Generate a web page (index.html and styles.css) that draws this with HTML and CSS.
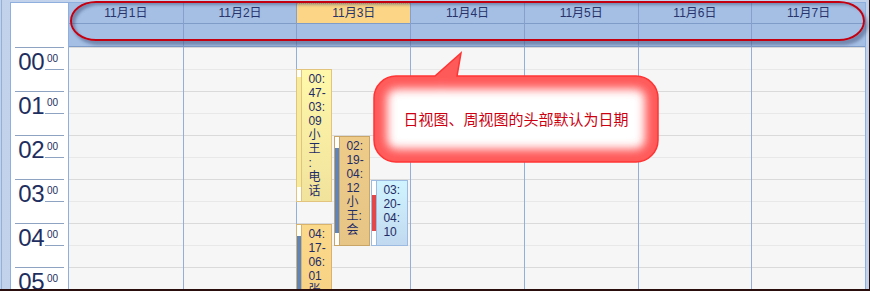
FILE: index.html
```html
<!DOCTYPE html>
<html lang="zh-CN">
<head>
<meta charset="utf-8">
<title>周视图</title>
<link rel="stylesheet" href="styles.css">
</head>
<body>
<div class="page">
  <div class="cal">
    <div class="cal-head">
      <div class="corner"></div>
      <div class="day-head"><div class="date">11月1日</div><div class="allday"></div></div>
      <div class="day-head"><div class="date">11月2日</div><div class="allday"></div></div>
      <div class="day-head today"><div class="date">11月3日</div><div class="allday"></div></div>
      <div class="day-head"><div class="date">11月4日</div><div class="allday"></div></div>
      <div class="day-head"><div class="date">11月5日</div><div class="allday"></div></div>
      <div class="day-head"><div class="date">11月6日</div><div class="allday"></div></div>
      <div class="day-head"><div class="date">11月7日</div><div class="allday"></div></div>
    </div>
    <div class="cal-body">
      <div class="times">
        <div class="hour"><span class="h">00</span><span class="m">00</span></div>
        <div class="hour"><span class="h">01</span><span class="m">00</span></div>
        <div class="hour"><span class="h">02</span><span class="m">00</span></div>
        <div class="hour"><span class="h">03</span><span class="m">00</span></div>
        <div class="hour"><span class="h">04</span><span class="m">00</span></div>
        <div class="hour"><span class="h">05</span><span class="m">00</span></div>
      </div>
      <div class="day"></div>
      <div class="day"></div>
      <div class="day">
        <div class="event ev-yellow col0" style="top:22px;height:133px">
          <div class="strip"><span class="bar" style="top:7px;height:110px"></span></div>
          <div class="ev-text">00:<br>47-<br>03:<br>09<br>小<br>王<br>:<br>电<br>话</div>
        </div>
        <div class="event ev-tan col1" style="top:89px;height:110px">
          <div class="strip"><span class="bar" style="top:11px;height:85px"></span></div>
          <div class="ev-text">02:<br>19-<br>04:<br>12<br>小<br>王:<br>会</div>
        </div>
        <div class="event ev-blue col2" style="top:133px;height:66px">
          <div class="strip"><span class="bar" style="top:14px;height:36px"></span></div>
          <div class="ev-text">03:<br>20-<br>04:<br>10</div>
        </div>
        <div class="event ev-orange col0" style="top:177px;height:130px">
          <div class="strip"><span class="bar" style="top:11px;height:100px"></span></div>
          <div class="ev-text">04:<br>17-<br>06:<br>01<br>张</div>
        </div>
      </div>
      <div class="day"></div>
      <div class="day"></div>
      <div class="day"></div>
      <div class="day"></div>
    </div>

    <div class="oval"></div>

    <div class="callout">
      <svg class="bubble" width="296" height="118" viewBox="0 0 296 118" aria-hidden="true">
        <defs>
          <clipPath id="bubbleClip">
            <path d="M26,26 L65,26 L91,3 L87,26 L266,26 A22,22 0 0 1 288,48 L288,90 A22,22 0 0 1 266,112 L26,112 A22,22 0 0 1 4,90 L4,48 A22,22 0 0 1 26,26 Z"/>
          </clipPath>
          <filter id="soft" x="-20%" y="-20%" width="140%" height="140%">
            <feGaussianBlur stdDeviation="5"/>
          </filter>
        </defs>
        <g clip-path="url(#bubbleClip)">
          <rect x="0" y="0" width="296" height="118" fill="#ffffff"/>
          <path d="M26,26 L65,26 L91,3 L87,26 L266,26 A22,22 0 0 1 288,48 L288,90 A22,22 0 0 1 266,112 L26,112 A22,22 0 0 1 4,90 L4,48 A22,22 0 0 1 26,26 Z" fill="none" stroke="#ff5a5a" stroke-width="26" filter="url(#soft)"/>
        </g>
        <path d="M26,26 L65,26 L91,3 L87,26 L266,26 A22,22 0 0 1 288,48 L288,90 A22,22 0 0 1 266,112 L26,112 A22,22 0 0 1 4,90 L4,48 A22,22 0 0 1 26,26 Z" fill="none" stroke="#ff3434" stroke-width="1.5"/>
      </svg>
      <span class="callout-text">日视图、周视图的头部默认为日期</span>
    </div>
  </div>
</div>
</body>
</html>
```

FILE: styles.css
```css
* { box-sizing: border-box; }

html, body {
  margin: 0;
  padding: 0;
}

body {
  width: 870px;
  height: 291px;
  overflow: hidden;
  background: #c7d6ed;
}

.page {
  width: 870px;
  height: 291px;
  padding: 2px 0 0 10px;
  border-right: 1px solid #2a0d0d;
  border-bottom: 2px solid #2a0d0d;
  background:
    linear-gradient(to right, transparent 1px, #93afda 1px, #93afda 2px, transparent 2px),
    radial-gradient(circle, #b9cbe6 0.6px, transparent 0.8px) 0 0 / 2px 2px,
    #cad8ee;
  overflow: hidden;
}

.cal {
  position: relative;
  width: 856px;
  height: 287px;
  border: 1px solid #8fb0de;
  border-bottom: 0;
  display: flex;
  flex-direction: column;
  font-family: "Liberation Sans", "Noto Sans CJK SC", sans-serif;
}

/* ---------- header ---------- */
.cal-head {
  display: grid;
  grid-template-columns: 58px repeat(7, 1fr);
  height: 44px;
  flex: none;
  background: #a4bee4;
}

.corner {
  background: #ffffff;
  border-right: 1px solid #8fb0de;
}

.day-head {
  display: flex;
  flex-direction: column;
  border-bottom: 1px solid #7f9bc8;
}

.day-head + .day-head {
  border-left: 1px solid #869fcb;
}

.date {
  height: 21px;
  padding-top: 2px;
  line-height: 17px;
  text-align: center;
  font-size: 12px;
  color: #27336a;
  border-bottom: 1px solid #7f9bc8;
}

.today .date {
  background: #fcd686;
  border-top: 1px dotted #e2b466;
  padding-top: 1px;
}

.allday {
  flex: 1;
}

/* ---------- body ---------- */
.cal-body {
  flex: 1;
  min-height: 0;
  display: grid;
  grid-template-columns: 58px repeat(7, 1fr);
  overflow: hidden;
}

.times {
  background: #ffffff;
  border-right: 1px solid #8fb0de;
  overflow: hidden;
}

.hour {
  height: 44px;
  margin: 0 4px;
  border-top: 1px solid #8ea2c2;
  display: flex;
  color: #1e2e5e;
}

.hour .h {
  width: 29px;
  padding-top: 2px;
  text-align: right;
  font-size: 24px;
  line-height: 24px;
  letter-spacing: -0.5px;
}

.hour .m {
  width: 19px;
  height: 22px;
  margin-left: 1px;
  padding: 6px 0 0 2px;
  font-size: 10px;
  line-height: 10px;
  border-bottom: 1px solid #8ea2c2;
}

.day {
  position: relative;
  background: repeating-linear-gradient(to bottom,
    #dadada 0, #dadada 1px,
    #f6f6f6 1px, #f6f6f6 22px,
    #e8e8e8 22px, #e8e8e8 23px,
    #f6f6f6 23px, #f6f6f6 44px);
}

.day + .day {
  border-left: 1px solid #93afd9;
}

/* ---------- events ---------- */
.event {
  position: absolute;
  display: flex;
  border: 1px solid;
  overflow: hidden;
  color: #1f2c66;
}

.col0 { left: -1px; width: 36px; }
.col1 { left: 37px; width: 36px; }
.col2 { left: 74px; width: 37px; }

.strip {
  position: relative;
  flex: none;
  width: 5px;
  background: #ffffff;
  border-right: 1px solid;
}

.bar {
  position: absolute;
  left: 0;
  right: 0;
}

.ev-text {
  padding: 2px 0 0 6px;
  font-size: 12px;
  line-height: 14px;
  white-space: nowrap;
}

.ev-yellow {
  border-color: #e2c47e;
  background: linear-gradient(to bottom, #fff8aa, #f1e29c);
}
.ev-yellow .strip { border-color: #e2c47e; }
.ev-yellow .bar { background: #f7ec9e; }

.ev-tan {
  border-color: #c9a568;
  background: linear-gradient(to bottom, #eecb88, #e6c586);
}
.ev-tan .strip { border-color: #c9a568; }
.ev-tan .bar { background: #5e84bd; }

.ev-blue {
  border-color: #9dbbe0;
  background: linear-gradient(to bottom, #d0f4ff, #c2d9ef);
}
.ev-blue .strip { border-color: #9dbbe0; }
.ev-blue .bar { background: #e2474a; }

.ev-orange {
  border-color: #d9b36c;
  background: linear-gradient(to bottom, #fbd98a, #f4cd82);
}
.ev-orange .strip { border-color: #d9b36c; }
.ev-orange .bar { background: #5e84bd; }

/* ---------- annotations ---------- */
.oval {
  position: absolute;
  left: 59px;
  top: -2px;
  width: 795px;
  height: 40px;
  border: 2px solid #c40010;
  border-radius: 26px / 20px;
  box-shadow:
    3px 4px 3px rgba(60, 74, 110, 0.45),
    inset 4px 3px 3px -1px rgba(60, 74, 110, 0.45);
  z-index: 3;
}

.callout {
  position: absolute;
  left: 363px;
  top: 73px;
  width: 284px;
  height: 86px;
  display: flex;
  align-items: center;
  justify-content: center;
  z-index: 4;
}

.bubble {
  position: absolute;
  left: -4px;
  top: -26px;
  overflow: visible;
}

.callout-text {
  position: relative;
  font-family: "Noto Sans CJK SC", sans-serif;
  font-size: 15px;
  line-height: 18px;
  color: #cc0010;
}
```
